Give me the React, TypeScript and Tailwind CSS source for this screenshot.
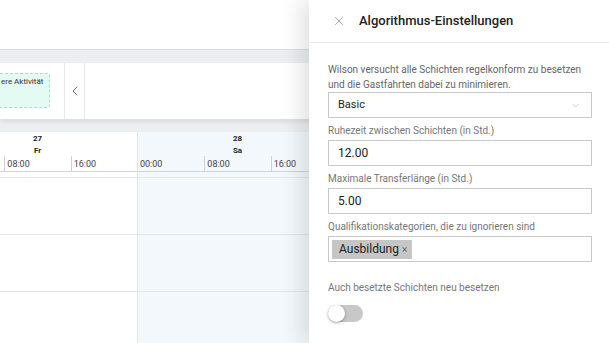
import React, { useState } from "react";
import { X, ChevronLeft, ChevronDown } from "lucide-react";

const days = [
  { num: "27", name: "Fr", weekend: false, first: true },
  { num: "28", name: "Sa", weekend: true, first: false },
];

const times = ["00:00", "08:00", "16:00"];

function DayColumn({ num, name, weekend, first }: { num: string; name: string; weekend: boolean; first: boolean }) {
  return (
    <div className={`w-[200px] shrink-0 flex flex-col border-l border-[#e2e4e7] ${weekend ? "bg-[#f3f8fd]" : "bg-white"}`}>
      <div className="h-[40px] flex flex-col border-b border-[#d2d4d7]">
        <div className="h-[24px] pt-[1px] flex flex-col items-center text-[8px] font-bold leading-[12px] text-[#222]">
          <span>{num}</span>
          <span>{name}</span>
        </div>
        <div className="flex-1 grid grid-cols-3">
          {times.map((t, i) => (
            <div
              key={t}
              className={`pl-[2px] text-[9px] leading-[16px] text-[#444] ${i === 0 ? "" : "border-l border-[#cfd1d4]"}`}
            >
              {/* the first slot of the first day is scrolled out of view */}
              {first && i === 0 ? "" : t}
            </div>
          ))}
        </div>
      </div>
      <div className="h-[6px] border-b border-[#e4e5e7]" />
      {[0, 1, 2].map((r) => (
        <div key={r} className="h-[57px] border-b border-[#e4e5e7]" />
      ))}
    </div>
  );
}

const box = "w-[264px] h-[26px] border border-[#c9c9c9] flex items-center";

export default function App() {
  const [reassign, setReassign] = useState(false);

  return (
    <div className="relative w-[609px] h-[343px] overflow-hidden bg-white" style={{ fontFamily: "Roboto, 'Noto Sans', sans-serif" }}>
      {/* Background planner */}
      <div className="flex flex-col h-full">
        <div className="h-[50px] bg-white border-b border-[#dadde1]" />
        <div className="h-[13px] bg-[#eceef1]" />
        <div className="h-[56px] bg-white flex shadow-[0_3px_5px_rgba(0,0,0,0.08)] relative z-10">
          <div className="w-[65px] shrink-0 border-r border-[#e6e7e9] pt-[10px]">
            <div className="ml-[-8px] w-[58px] h-[35px] rounded-[3px] border border-dashed border-[#b9d6c9] bg-[#e4fbf3] pl-[8px] pt-[2px] text-[8px] text-[#333]">
              ere Aktivität
            </div>
          </div>
          <div className="w-[20px] shrink-0 border-r border-[#e6e7e9] flex items-center justify-center">
            <ChevronLeft className="w-[16px] h-[16px] text-[#444]" strokeWidth={1.2} />
          </div>
          <div className="flex-1" />
        </div>
        <div className="h-[13px] bg-[#eceef1]" />
        <div className="flex-1 overflow-hidden">
          <div className="flex ml-[-63px]">
            {days.map((d) => (
              <DayColumn key={d.num} {...d} />
            ))}
          </div>
        </div>
      </div>

      {/* Settings drawer */}
      <div className="absolute right-0 top-0 h-full w-[300px] bg-white shadow-[-10px_0_18px_rgba(0,0,0,0.1)] z-20 flex flex-col">
        <div className="h-[43px] border-b border-[#ebebeb] flex items-center pl-[23px]">
          <button type="button" className="w-[14px] h-[14px] flex items-center justify-center text-[#8a8a8a]">
            <X className="w-[14px] h-[14px]" strokeWidth={1.3} />
          </button>
          <div className="ml-[13px] text-[13px] font-medium text-[#222]">Algorithmus-Einstellungen</div>
        </div>

        <div className="pl-[19px] pr-[17px] pt-[19px] flex flex-col items-start">
          <p className="w-[264px] text-[10px] leading-[15px] text-[#666]">
            Wilson versucht alle Schichten regelkonform zu besetzen und die Gastfahrten dabei zu minimieren.
          </p>
          <div className={`${box} justify-between pl-[9px] pr-[10px]`}>
            <span className="text-[11px] text-[#222]">Basic</span>
            <ChevronDown className="w-[11px] h-[11px] text-[#aaa]" strokeWidth={1.2} />
          </div>

          <label className="mt-[6px] text-[10px] leading-[14px] text-[#777]">Ruhezeit zwischen Schichten (in Std.)</label>
          <div className={`${box} mt-[2px] pl-[9px] text-[12px] text-[#222]`}>12.00</div>

          <label className="mt-[6px] text-[10px] leading-[14px] text-[#777]">Maximale Transferlänge (in Std.)</label>
          <div className={`${box} mt-[2px] pl-[9px] text-[12px] text-[#222]`}>5.00</div>

          <label className="mt-[6px] text-[10px] leading-[14px] text-[#777]">Qualifikationskategorien, die zu ignorieren sind</label>
          <div className={`${box} mt-[2px] pl-[3px]`}>
            <span className="h-[19px] bg-[#c6c6c6] flex items-center pl-[7px] pr-[5px] text-[12px] text-[#222]">
              Ausbildung
              <span className="ml-[3px] text-[10px] text-[#666]">×</span>
            </span>
          </div>

          <div className="mt-[19px] text-[10px] leading-[14px] text-[#777]">Auch besetzte Schichten neu besetzen</div>
          <button
            type="button"
            onClick={() => setReassign((v) => !v)}
            className={`mt-[10px] w-[35px] h-[17px] rounded-full relative ${reassign ? "bg-[#7aa7e0]" : "bg-[#c8c8c8]"}`}
          >
            <span
              className={`absolute top-0 h-[17px] w-[17px] rounded-full bg-white shadow-[0_1px_3px_rgba(0,0,0,0.35)] ${reassign ? "right-0" : "left-0"}`}
            />
          </button>
        </div>
      </div>
    </div>
  );
}
